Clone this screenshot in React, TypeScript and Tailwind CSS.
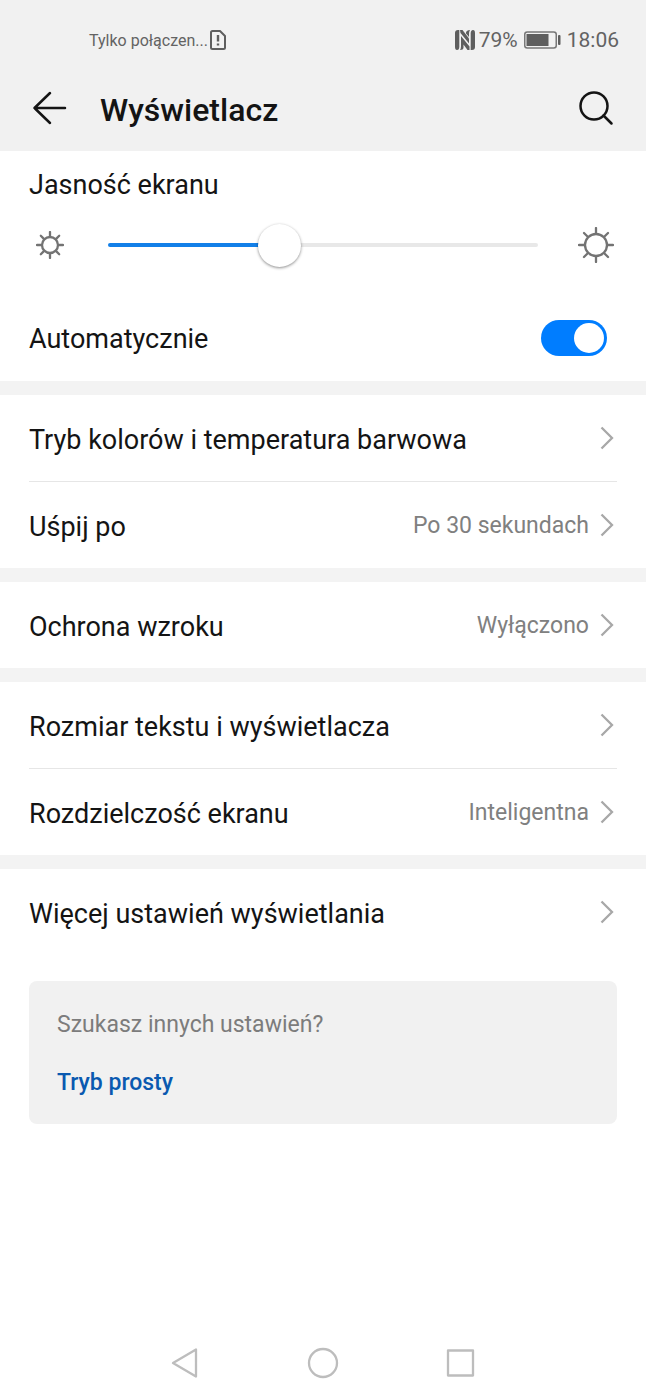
import { useState } from "react";

interface SettingItem {
  label: string;
  value?: string;
}

const groups: SettingItem[][] = [
  [{ label: "Tryb kolorów i temperatura barwowa" }, { label: "Uśpij po", value: "Po 30 sekundach" }],
  [{ label: "Ochrona wzroku", value: "Wyłączono" }],
  [{ label: "Rozmiar tekstu i wyświetlacza" }, { label: "Rozdzielczość ekranu", value: "Inteligentna" }],
  [{ label: "Więcej ustawień wyświetlania" }],
];

function Sun({ size, radius, ray }: { size: number; radius: number; ray: number }) {
  const c = size / 2;
  return (
    <svg width={size} height={size} viewBox={`0 0 ${size} ${size}`} fill="none" stroke="#737373" strokeWidth="2.3" strokeLinecap="round" className="shrink-0">
      <circle cx={c} cy={c} r={radius} />
      {[0, 45, 90, 135, 180, 225, 270, 315].map(angle => (
        <path key={angle} d={`M${c} ${c - radius - 1}V${c - radius - ray}`} transform={`rotate(${angle} ${c} ${c})`} />
      ))}
    </svg>
  );
}

function StatusBar() {
  return (
    <div className="flex h-16 items-center pt-4 pl-[89px] pr-[27px] text-[#636363]">
      <span className="pt-0.5 text-base">Tylko połączen...</span>
      <svg width="16" height="20" viewBox="0 0 16 20" fill="none" stroke="#5e5e5e" strokeWidth="2" strokeLinejoin="round" className="ml-0.5">
        <path d="M2.5 1H10L15 6V17.5Q15 19 13.5 19H2.5Q1 19 1 17.5V2.5Q1 1 2.5 1Z" />
        <path d="M8 5V11.5M8 13.5V15.5" strokeWidth="2.4" />
      </svg>
      <div className="ml-auto flex items-center text-[21px]">
        {/* NFC */}
        <svg width="20" height="20" viewBox="0 0 20 20" fill="#5e5e5e" className="mr-1">
          <path d="M3 0H4.300V16.500Q4.300 20 2 20Q0 20 0 17V3Q0 0 3 0Z" />
          <path d="M5 0H7.500L14 8.500V13.500L5.500 3Z" />
          <path d="M6 6L14.500 16.500V20H12.500L8.500 14.500V17.500Q8.500 20 5 20Q6 18.500 6 16.500Z" />
          <path d="M17 20H15.700V3.500Q15.700 0 18 0Q20 0 20 3V17Q20 20 17 20Z" />
          <path d="M11 2.500Q11.500 0 15 0Q14 1.500 14 3.500V7L11 3.500Z" />
        </svg>
        <span className="pt-0.5">79%</span>
        <svg width="37" height="18" viewBox="0 0 37 18" fill="none" className="mr-1.5 ml-1.5">
          <rect x="0.750" y="1" width="31.500" height="16" rx="2.500" stroke="#777" strokeWidth="1.500" />
          <rect x="2.500" y="3" width="22" height="12" fill="#5e5e5e" />
          <rect x="34" y="4" width="2.500" height="10" rx="1" fill="#5e5e5e" />
        </svg>
        <span className="pt-0.5">18:06</span>
      </div>
    </div>
  );
}

function SettingRow({ label, value }: SettingItem) {
  return (
    <button type="button" className="box-content flex h-[86px] w-full items-center text-left">
      <span className="pt-1 text-[27px]">{label}</span>
      {value && <span className="ml-auto pt-0.5 text-[23px] text-[#808080]">{value}</span>}
      <svg width="14" height="24" viewBox="0 0 14 24" fill="none" stroke="#a8a8a8" strokeWidth="2.300" className={value ? "mr-[3px] ml-[11px]" : "mr-[3px] ml-auto"}>
        <path d="M1.500 1.500L12 12L1.500 22.500" />
      </svg>
    </button>
  );
}

export default function App() {
  const [brightness, setBrightness] = useState(99);
  const [auto, setAuto] = useState(true);
  const fill = (brightness / 255) * 100;

  return (
    <div className="flex min-h-screen flex-col bg-white font-['Roboto',sans-serif] text-[#141414]">
      <header className="bg-[#f1f1f1]">
        <StatusBar />
        <div className="flex h-[87px] items-center px-8">
          <button type="button" aria-label="Wstecz">
            <svg width="36" height="36" viewBox="0 0 36 36" fill="none" stroke="#141414" strokeWidth="2.500" strokeLinecap="round" strokeLinejoin="round">
              <path d="M18 3L2.500 18L18 33M2.500 18H33" />
            </svg>
          </button>
          <h1 className="ml-8 pt-1 text-[32px] font-medium">Wyświetlacz</h1>
          <button type="button" aria-label="Szukaj" className="ml-auto">
            <svg width="36" height="36" viewBox="0 0 36 36" fill="none" stroke="#141414" strokeWidth="2.500" strokeLinecap="round">
              <circle cx="16" cy="16" r="13.500" />
              <path d="M25.500 25.500L33.500 33.500" />
            </svg>
          </button>
        </div>
      </header>

      <main>
        <section className="px-[29px]">
          <label htmlFor="brightness" className="flex h-[68px] items-center text-[27px]">Jasność ekranu</label>
          <div className="flex h-[52px] items-center pr-[3px] pl-[7px]">
            <Sun size={28} radius={8} ray={5} />
            <input
              id="brightness"
              type="range"
              min={0}
              max={255}
              value={brightness}
              onChange={e => setBrightness(Number(e.target.value))}
              style={{ backgroundImage: `linear-gradient(to right, #127fe8 ${fill}%, #e8e8e8 ${fill}%)` }}
              className="mr-10 ml-11 h-1 min-w-0 flex-1 cursor-pointer appearance-none rounded-full [&::-webkit-slider-thumb]:size-[43px] [&::-webkit-slider-thumb]:appearance-none [&::-webkit-slider-thumb]:rounded-full [&::-webkit-slider-thumb]:bg-white [&::-webkit-slider-thumb]:shadow-[0_1px_3px_rgba(0,0,0,0.45)]"
            />
            <Sun size={36} radius={11} ray={6} />
          </div>
          <div className="flex h-[110px] items-center justify-between pt-6 pr-[10px]">
            <label htmlFor="auto" className="pt-0.5 text-[27px]">Automatycznie</label>
            <input
              id="auto"
              type="checkbox"
              role="switch"
              checked={auto}
              onChange={e => setAuto(e.target.checked)}
              className="flex h-9 w-[66px] cursor-pointer appearance-none items-center rounded-full bg-[#c4c4c4] px-[3px] before:size-[30px] before:rounded-full before:bg-white checked:justify-end checked:bg-[#007dff]"
            />
          </div>
        </section>

        {groups.map(group => (
          <section key={group[0].label} className="border-t-[14px] border-[#f3f3f3] px-[29px]">
            <div className="divide-y divide-[#e6e6e6]">
              {group.map(item => (
                <SettingRow key={item.label} {...item} />
              ))}
            </div>
          </section>
        ))}

        <aside className="mx-[29px] mt-[26px] flex h-[143px] flex-col items-start gap-[22px] rounded-lg bg-[#f1f1f1] px-7 pt-[26px] text-[23px]">
          <p className="leading-9 text-[#7c7c7c]">Szukasz innych ustawień?</p>
          <a href="#simple" className="leading-9 font-medium text-[#0a59b0]">Tryb prosty</a>
        </aside>
      </main>

      {/* System navigation */}
      <nav className="mt-auto flex h-[74px] items-center justify-center gap-[106px]">
        <button type="button" aria-label="Wstecz">
          <svg width="32" height="32" viewBox="0 0 32 32" fill="none" stroke="#bdbdbd" strokeWidth="2.300" strokeLinejoin="round">
            <path d="M4 16L27 2.500V29.500Z" />
          </svg>
        </button>
        <button type="button" aria-label="Ekran główny">
          <svg width="32" height="32" viewBox="0 0 32 32" fill="none" stroke="#bdbdbd" strokeWidth="2.300">
            <circle cx="16" cy="16" r="14" />
          </svg>
        </button>
        <button type="button" aria-label="Ostatnie">
          <svg width="32" height="32" viewBox="0 0 32 32" fill="none" stroke="#bdbdbd" strokeWidth="2.300" strokeLinejoin="round">
            <rect x="3" y="3.500" width="25" height="25" />
          </svg>
        </button>
      </nav>
    </div>
  );
}
